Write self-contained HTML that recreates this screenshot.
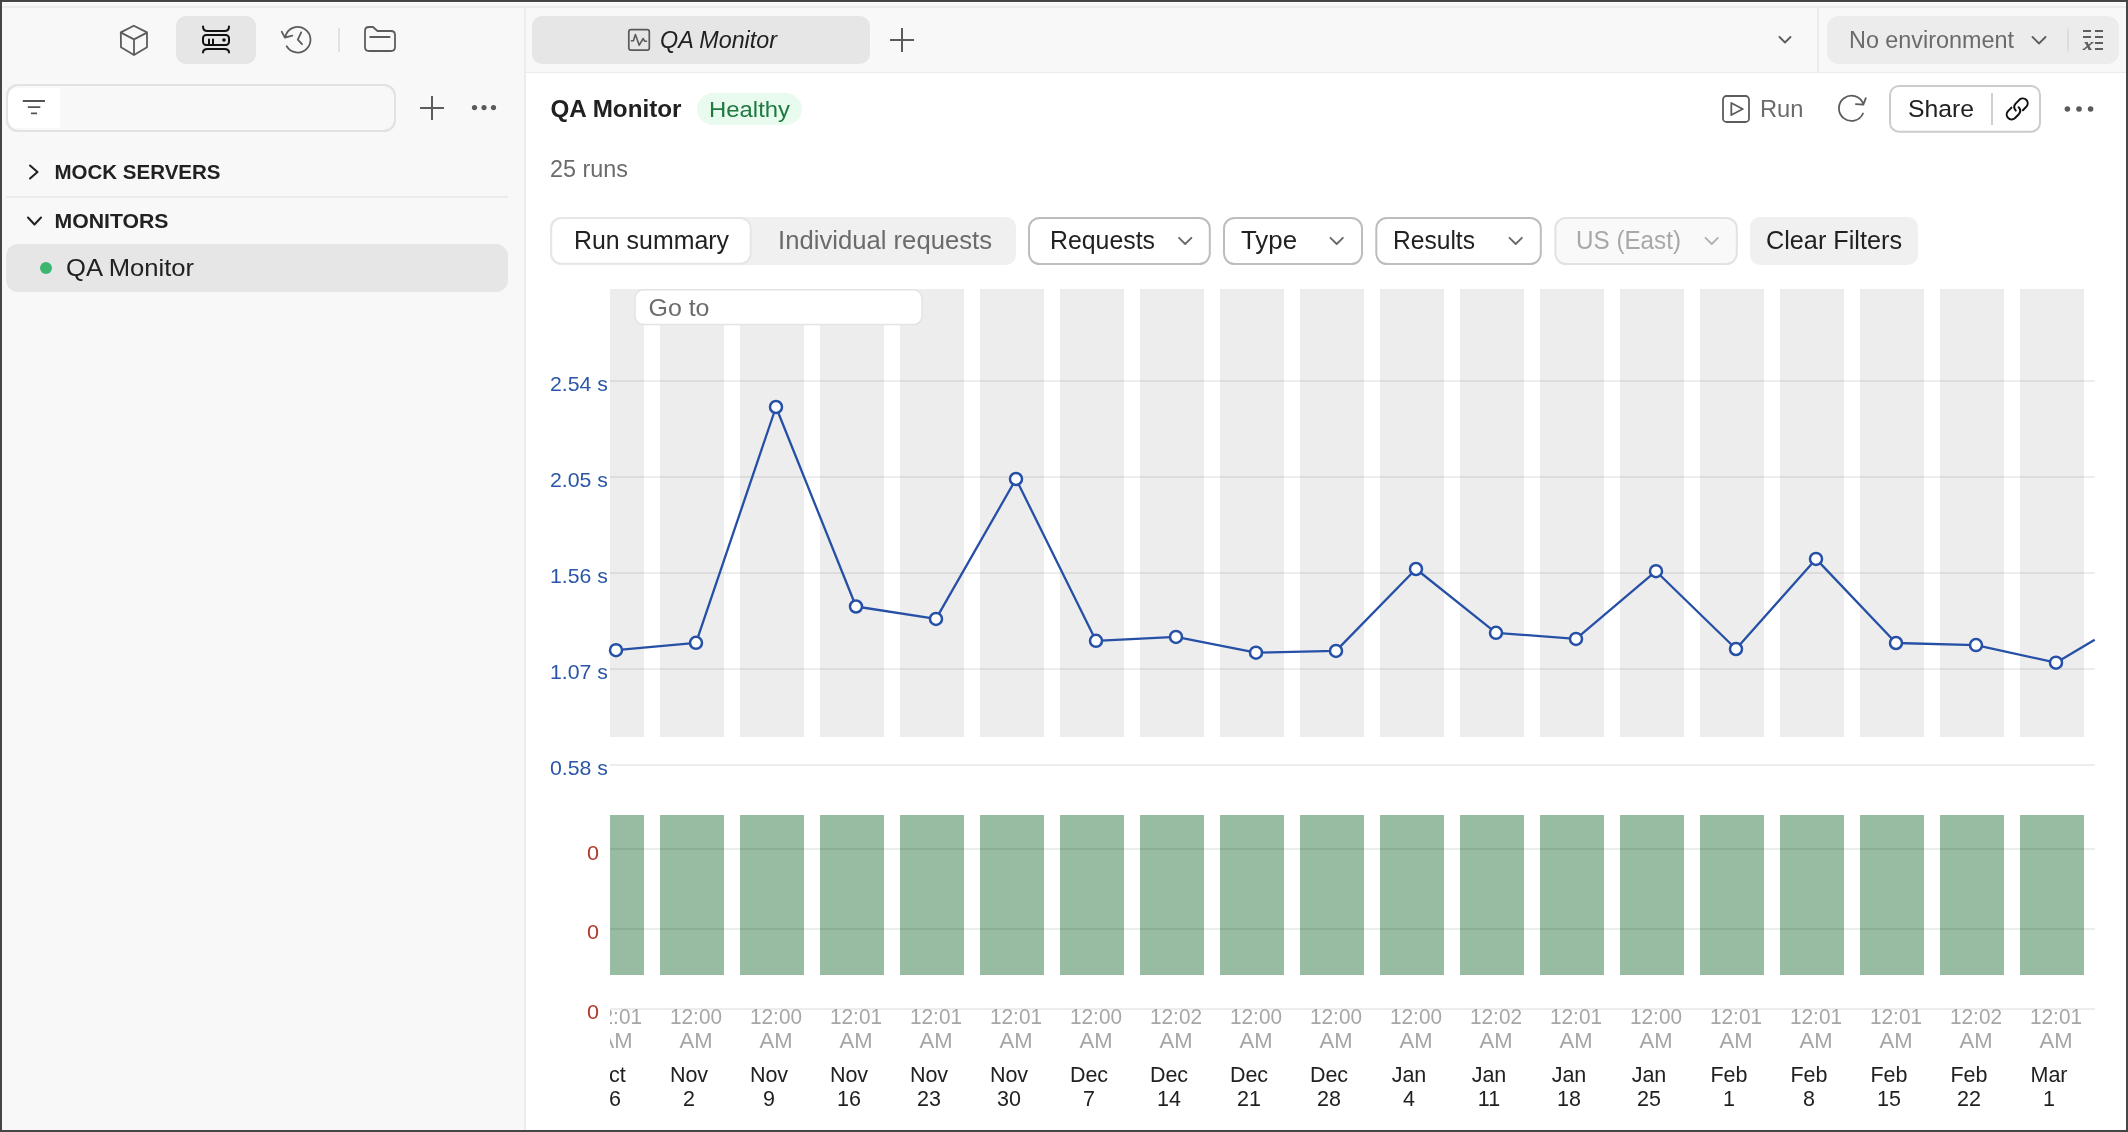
<!DOCTYPE html>
<html><head><meta charset="utf-8"><title>QA Monitor</title>
<style>
html,body{margin:0;padding:0;background:#454545;}
body{width:2128px;height:1132px;overflow:hidden;font-family:"Liberation Sans", sans-serif;}
svg{display:block;will-change:transform;}
text{font-family:"Liberation Sans", sans-serif;}
</style></head><body>
<svg width="2128" height="1132" viewBox="0 0 2128 1132">
<rect x="0" y="0" width="2128" height="1132" fill="#454545"/>
<rect x="2" y="2" width="2124" height="1128" fill="#f8f8f8"/>
<rect x="2" y="2" width="2124" height="1" fill="#ffffff"/>
<rect x="2" y="6" width="2124" height="2" fill="#ebebeb"/>
<rect x="526" y="73" width="1600" height="1057" fill="#ffffff"/>
<rect x="524" y="8" width="2" height="1122" fill="#ececec"/>
<rect x="526" y="72" width="1600" height="1" fill="#ebebeb"/>
<rect x="1817" y="8" width="2" height="64" fill="#ececec"/>
<rect x="176" y="16" width="80" height="48" rx="10" fill="#e6e6e6"/>
<path d="M120.8,32.4 L133.8,25.7 L147,32.4 L147,47.2 L134,55 L121,47.2 Z M121,32.6 L134,39.4 L147,32.6 M134,39.4 L134,55" fill="none" stroke="#5c5c5c" stroke-width="1.8" stroke-linecap="round" stroke-linejoin="round"/>
<path d="M203,26.5 Q203,31 207.5,31 L224.5,31 Q229,31 229,26.5 M203,52.5 Q203,49 207.5,49 L224.5,49 Q229,49 229,52.5" fill="none" stroke="#111" stroke-width="2" stroke-linecap="round" stroke-linejoin="round"/>
<rect x="203" y="35" width="26" height="10" rx="3.2" fill="none" stroke="#111" stroke-width="2" stroke-linecap="round" stroke-linejoin="round"/>
<path d="M209,39.5 V44.5 M213,39.5 V44.5" fill="none" stroke="#111" stroke-width="2" stroke-linecap="round" stroke-linejoin="round"/>
<circle cx="224" cy="40" r="1.8" fill="#111"/>
<path d="M286.7,46.3 A12.8,12.8 0 1 0 285.6,35.6 M281.7,31.7 L284.9,37.7 L292.3,35.7 M301.2,32.4 L297.8,39.6 L302,44.2" fill="none" stroke="#5c5c5c" stroke-width="1.8" stroke-linecap="round" stroke-linejoin="round"/>
<rect x="338" y="28" width="2" height="24" fill="#e2e2e2"/>
<path d="M365,31 Q365,27 369,27 L373,27 L377.5,31 L391,31 Q395,31 395,35 L395,47 Q395,51 391,51 L369,51 Q365,51 365,47 Z M370.2,37 H389.6" fill="none" stroke="#5c5c5c" stroke-width="1.8" stroke-linecap="round" stroke-linejoin="round"/>
<rect x="7" y="85" width="388" height="46" rx="11" fill="#f8f8f8" stroke="#e3e3e3" stroke-width="2"/>
<path d="M8,98 Q8,88 18,88 L60,88 L60,128 L18,128 Q8,128 8,118 Z" fill="#ffffff"/><rect x="7" y="85" width="388" height="46" rx="11" fill="none" stroke="#e3e3e3" stroke-width="2"/>
<path d="M22.8,101 H45 M27.8,107.1 H40.3 M31,113.4 H37.1" fill="none" stroke="#555" stroke-width="1.8"/>
<path d="M420,108 H444 M432,96 V120" fill="none" stroke="#5c5c5c" stroke-width="2" stroke-linecap="butt"/>
<circle cx="474.5" cy="107.6" r="2.6" fill="#5a5a5a"/>
<circle cx="484" cy="107.6" r="2.6" fill="#5a5a5a"/>
<circle cx="493.5" cy="107.6" r="2.6" fill="#5a5a5a"/>
<path d="M30,165.5 L37.5,172 L30,178.5" fill="none" stroke="#212121" stroke-width="2" stroke-linecap="round" stroke-linejoin="round"/>
<text x="54.5" y="179" font-size="20.5" fill="#212121" font-weight="bold" textLength="166" lengthAdjust="spacingAndGlyphs" >MOCK SERVERS</text>
<rect x="6" y="196" width="502" height="2" fill="#ebebeb"/>
<path d="M28,217.5 L34.5,224.5 L41,217.5" fill="none" stroke="#212121" stroke-width="2" stroke-linecap="round" stroke-linejoin="round"/>
<text x="54.5" y="228" font-size="20.5" fill="#212121" font-weight="bold" textLength="114" lengthAdjust="spacingAndGlyphs">MONITORS</text>
<rect x="6" y="244" width="502" height="48" rx="12" fill="#e6e6e6"/>
<circle cx="46" cy="268" r="6" fill="#3db66f"/>
<text x="66" y="275.5" font-size="24" fill="#212121" textLength="128" lengthAdjust="spacingAndGlyphs">QA Monitor</text>
<rect x="532" y="16" width="338" height="48" rx="10" fill="#e6e6e6"/>
<rect x="628.8" y="29.7" width="20.5" height="20.5" rx="2.2" fill="none" stroke="#5a5a5a" stroke-width="1.7"/>
<path d="M631.4,40.8 H633.4 L635.4,34.6 L639.2,45.2 L643.2,38.5 L644.6,41.2 H646.5" fill="none" stroke="#5a5a5a" stroke-width="1.6" stroke-linecap="round" stroke-linejoin="round"/>
<text x="660" y="48" font-size="23" fill="#212121" font-style="italic" textLength="117" lengthAdjust="spacingAndGlyphs">QA Monitor</text>
<path d="M890,40 H914 M902,28 V52" fill="none" stroke="#5c5c5c" stroke-width="2" stroke-linecap="butt"/>
<path d="M1779.5,37 L1785,42.5 L1790.5,37" fill="none" stroke="#5c5c5c" stroke-width="1.8" stroke-linecap="round" stroke-linejoin="round"/>
<rect x="1827" y="16" width="292" height="48" rx="12" fill="#ececec"/>
<text x="1849" y="48" font-size="23" fill="#6b6b6b" textLength="165" lengthAdjust="spacingAndGlyphs">No environment</text>
<path d="M2032.5,37 L2039,43.5 L2045.5,37" fill="none" stroke="#5c5c5c" stroke-width="1.8" stroke-linecap="round" stroke-linejoin="round"/>
<rect x="2067" y="28.5" width="2" height="23" fill="#dddddd"/>
<path d="M2083,31 H2091 M2083,37 H2091 M2095,31 H2103 M2095,37 H2103 M2095,43 H2103 M2095,49 H2103" fill="none" stroke="#5e5e5e" stroke-width="1.8"/>
<path d="M2086.2,42.4 L2090,49.6" fill="none" stroke="#5e5e5e" stroke-width="2.3"/><path d="M2092.4,42.4 L2083.8,49.6 M2084.6,42.6 H2087.6 M2088.6,49.4 H2091.6 M2090.8,42.6 H2093.4 M2082.6,49.4 H2085.2" fill="none" stroke="#5e5e5e" stroke-width="1.4"/>
<text x="550.5" y="117.2" font-size="24" fill="#212121" font-weight="bold" textLength="131" lengthAdjust="spacingAndGlyphs">QA Monitor</text>
<rect x="697" y="93" width="105" height="32" rx="16" fill="#e9fbef"/>
<text x="709" y="117" font-size="22.5" fill="#1f7a40" textLength="81" lengthAdjust="spacingAndGlyphs">Healthy</text>
<rect x="1723" y="96" width="26" height="26" rx="3.5" fill="none" stroke="#5c5c5c" stroke-width="1.8" stroke-linecap="round" stroke-linejoin="round"/>
<path d="M1731.3,103 L1742.8,109 L1731.3,115 Z" fill="none" stroke="#5c5c5c" stroke-width="1.8" stroke-linecap="round" stroke-linejoin="round"/>
<text x="1760" y="116.6" font-size="24.5" fill="#6b6b6b" textLength="43.5" lengthAdjust="spacingAndGlyphs">Run</text>
<path d="M1863,113.5 A12.6,12.6 0 1 1 1863.2,103.6 M1865.8,98.2 L1863.3,104.6 L1855.9,104.1" fill="none" stroke="#5c5c5c" stroke-width="1.8" stroke-linecap="round" stroke-linejoin="round"/>
<rect x="1890" y="86" width="150" height="45.7" rx="9" fill="#ffffff" stroke="#cccccc" stroke-width="2"/>
<text x="1908" y="116.6" font-size="24.5" fill="#212121" textLength="66" lengthAdjust="spacingAndGlyphs">Share</text>
<rect x="1991" y="93" width="2" height="32" fill="#d0d0d0"/>
<path d="M2015.8,110.6 Q2012.6,107 2015.6,103.6 L2019.6,99.6 A4.9,4.9 0 0 1 2026.6,106.4 L2022.9,110.2" fill="none" stroke="#111" stroke-width="2" stroke-linecap="round" stroke-linejoin="round"/>
<path d="M2015.8,110.6 Q2012.6,107 2015.6,103.6 L2019.6,99.6 A4.9,4.9 0 0 1 2026.6,106.4 L2022.9,110.2" transform="rotate(180 2017.2 108.9)" fill="none" stroke="#111" stroke-width="2" stroke-linecap="round" stroke-linejoin="round"/>
<circle cx="2067.4" cy="109" r="2.8" fill="#5a5a5a"/>
<circle cx="2079" cy="109" r="2.8" fill="#5a5a5a"/>
<circle cx="2090.6" cy="109" r="2.8" fill="#5a5a5a"/>
<text x="550" y="177" font-size="23" fill="#6b6b6b" textLength="78" lengthAdjust="spacingAndGlyphs">25 runs</text>
<rect x="550" y="217" width="466" height="48" rx="10" fill="#f0f0f0"/>
<rect x="551.2" y="218" width="199.5" height="45.8" rx="10.5" fill="#ffffff" stroke="#e6e6e6" stroke-width="2"/>
<text x="574" y="249.2" font-size="25" fill="#212121" textLength="155" lengthAdjust="spacingAndGlyphs">Run summary</text>
<text x="778" y="249.2" font-size="25" fill="#6b6b6b" textLength="214" lengthAdjust="spacingAndGlyphs">Individual requests</text>
<rect x="1029" y="218" width="180.79999999999995" height="46" rx="10.5" fill="#ffffff" stroke="#bdbdbd" stroke-width="2"/>
<text x="1050" y="249.2" font-size="25" fill="#212121" textLength="105" lengthAdjust="spacingAndGlyphs">Requests</text>
<path d="M1179,237.8 L1185.2,244 L1191.4,237.8" fill="none" stroke="#666666" stroke-width="1.8" stroke-linecap="round" stroke-linejoin="round"/>
<rect x="1224" y="218" width="138" height="46" rx="10.5" fill="#ffffff" stroke="#bdbdbd" stroke-width="2"/>
<text x="1241" y="249.2" font-size="25" fill="#212121" textLength="56" lengthAdjust="spacingAndGlyphs">Type</text>
<path d="M1330.5,237.8 L1336.7,244 L1342.9,237.8" fill="none" stroke="#666666" stroke-width="1.8" stroke-linecap="round" stroke-linejoin="round"/>
<rect x="1376.3" y="218" width="164.5" height="46" rx="10.5" fill="#ffffff" stroke="#bdbdbd" stroke-width="2"/>
<text x="1393" y="249.2" font-size="25" fill="#212121" textLength="82" lengthAdjust="spacingAndGlyphs">Results</text>
<path d="M1509.5,237.8 L1515.7,244 L1521.9,237.8" fill="none" stroke="#666666" stroke-width="1.8" stroke-linecap="round" stroke-linejoin="round"/>
<rect x="1555.4" y="218" width="181.39999999999986" height="46" rx="10.5" fill="#f9f9f9" stroke="#e2e2e2" stroke-width="2"/>
<text x="1576" y="249.2" font-size="25" fill="#a8a8a8" textLength="105" lengthAdjust="spacingAndGlyphs">US (East)</text>
<path d="M1705.5,237.8 L1711.7,244 L1717.9,237.8" fill="none" stroke="#b0b0b0" stroke-width="1.8" stroke-linecap="round" stroke-linejoin="round"/>
<rect x="1750" y="217" width="168" height="48" rx="10" fill="#f0f0f0"/>
<text x="1766" y="249.2" font-size="25" fill="#212121" textLength="136" lengthAdjust="spacingAndGlyphs">Clear Filters</text>
<defs><clipPath id="plot"><rect x="610" y="0" width="1516" height="1132"/></clipPath></defs>
<g clip-path="url(#plot)">
<rect x="580" y="289" width="64" height="448" fill="#ededed"/>
<rect x="660" y="289" width="64" height="448" fill="#ededed"/>
<rect x="740" y="289" width="64" height="448" fill="#ededed"/>
<rect x="820" y="289" width="64" height="448" fill="#ededed"/>
<rect x="900" y="289" width="64" height="448" fill="#ededed"/>
<rect x="980" y="289" width="64" height="448" fill="#ededed"/>
<rect x="1060" y="289" width="64" height="448" fill="#ededed"/>
<rect x="1140" y="289" width="64" height="448" fill="#ededed"/>
<rect x="1220" y="289" width="64" height="448" fill="#ededed"/>
<rect x="1300" y="289" width="64" height="448" fill="#ededed"/>
<rect x="1380" y="289" width="64" height="448" fill="#ededed"/>
<rect x="1460" y="289" width="64" height="448" fill="#ededed"/>
<rect x="1540" y="289" width="64" height="448" fill="#ededed"/>
<rect x="1620" y="289" width="64" height="448" fill="#ededed"/>
<rect x="1700" y="289" width="64" height="448" fill="#ededed"/>
<rect x="1780" y="289" width="64" height="448" fill="#ededed"/>
<rect x="1860" y="289" width="64" height="448" fill="#ededed"/>
<rect x="1940" y="289" width="64" height="448" fill="#ededed"/>
<rect x="2020" y="289" width="64" height="448" fill="#ededed"/>
<rect x="610" y="289" width="354" height="36" fill="#ededed"/>
</g>
<rect x="610" y="380" width="1485" height="2" fill="#000" fill-opacity="0.07"/>
<rect x="610" y="476" width="1485" height="2" fill="#000" fill-opacity="0.07"/>
<rect x="610" y="572" width="1485" height="2" fill="#000" fill-opacity="0.07"/>
<rect x="610" y="668" width="1485" height="2" fill="#000" fill-opacity="0.07"/>
<rect x="610" y="764" width="1485" height="2" fill="#000" fill-opacity="0.07"/>
<rect x="635" y="289.8" width="287" height="34.8" rx="8.5" fill="#ffffff" stroke="#e3e3e3" stroke-width="1.5"/>
<text x="648.5" y="316" font-size="24.5" fill="#6b6b6b" textLength="61" lengthAdjust="spacingAndGlyphs">Go to</text>
<text x="550" y="390.9" font-size="21" fill="#2b56a8" textLength="58" lengthAdjust="spacingAndGlyphs">2.54 s</text>
<text x="550" y="486.8" font-size="21" fill="#2b56a8" textLength="58" lengthAdjust="spacingAndGlyphs">2.05 s</text>
<text x="550" y="582.8" font-size="21" fill="#2b56a8" textLength="58" lengthAdjust="spacingAndGlyphs">1.56 s</text>
<text x="550" y="678.8" font-size="21" fill="#2b56a8" textLength="58" lengthAdjust="spacingAndGlyphs">1.07 s</text>
<text x="550" y="775" font-size="21" fill="#2b56a8" textLength="58" lengthAdjust="spacingAndGlyphs">0.58 s</text>
<path d="M616,650.2 L696,642.8 L776,407 L856,606.5 L936,618.9 L1016,479 L1096,640.8 L1176,636.9 L1256,652.7 L1336,650.9 L1416,569 L1496,632.8 L1576,638.9 L1656,571.2 L1736,649 L1816,558.9 L1896,643 L1976,645.1 L2056,662.7 L2094.7,639.8" fill="none" stroke="#2650a6" stroke-width="2.3" stroke-linejoin="round"/>
<circle cx="616" cy="650.2" r="6" fill="#ffffff" stroke="#2650a6" stroke-width="2.5"/>
<circle cx="696" cy="642.8" r="6" fill="#ffffff" stroke="#2650a6" stroke-width="2.5"/>
<circle cx="776" cy="407" r="6" fill="#ffffff" stroke="#2650a6" stroke-width="2.5"/>
<circle cx="856" cy="606.5" r="6" fill="#ffffff" stroke="#2650a6" stroke-width="2.5"/>
<circle cx="936" cy="618.9" r="6" fill="#ffffff" stroke="#2650a6" stroke-width="2.5"/>
<circle cx="1016" cy="479" r="6" fill="#ffffff" stroke="#2650a6" stroke-width="2.5"/>
<circle cx="1096" cy="640.8" r="6" fill="#ffffff" stroke="#2650a6" stroke-width="2.5"/>
<circle cx="1176" cy="636.9" r="6" fill="#ffffff" stroke="#2650a6" stroke-width="2.5"/>
<circle cx="1256" cy="652.7" r="6" fill="#ffffff" stroke="#2650a6" stroke-width="2.5"/>
<circle cx="1336" cy="650.9" r="6" fill="#ffffff" stroke="#2650a6" stroke-width="2.5"/>
<circle cx="1416" cy="569" r="6" fill="#ffffff" stroke="#2650a6" stroke-width="2.5"/>
<circle cx="1496" cy="632.8" r="6" fill="#ffffff" stroke="#2650a6" stroke-width="2.5"/>
<circle cx="1576" cy="638.9" r="6" fill="#ffffff" stroke="#2650a6" stroke-width="2.5"/>
<circle cx="1656" cy="571.2" r="6" fill="#ffffff" stroke="#2650a6" stroke-width="2.5"/>
<circle cx="1736" cy="649" r="6" fill="#ffffff" stroke="#2650a6" stroke-width="2.5"/>
<circle cx="1816" cy="558.9" r="6" fill="#ffffff" stroke="#2650a6" stroke-width="2.5"/>
<circle cx="1896" cy="643" r="6" fill="#ffffff" stroke="#2650a6" stroke-width="2.5"/>
<circle cx="1976" cy="645.1" r="6" fill="#ffffff" stroke="#2650a6" stroke-width="2.5"/>
<circle cx="2056" cy="662.7" r="6" fill="#ffffff" stroke="#2650a6" stroke-width="2.5"/>
<g clip-path="url(#plot)">
<rect x="580" y="815" width="64" height="160" fill="#97bca1"/>
<rect x="660" y="815" width="64" height="160" fill="#97bca1"/>
<rect x="740" y="815" width="64" height="160" fill="#97bca1"/>
<rect x="820" y="815" width="64" height="160" fill="#97bca1"/>
<rect x="900" y="815" width="64" height="160" fill="#97bca1"/>
<rect x="980" y="815" width="64" height="160" fill="#97bca1"/>
<rect x="1060" y="815" width="64" height="160" fill="#97bca1"/>
<rect x="1140" y="815" width="64" height="160" fill="#97bca1"/>
<rect x="1220" y="815" width="64" height="160" fill="#97bca1"/>
<rect x="1300" y="815" width="64" height="160" fill="#97bca1"/>
<rect x="1380" y="815" width="64" height="160" fill="#97bca1"/>
<rect x="1460" y="815" width="64" height="160" fill="#97bca1"/>
<rect x="1540" y="815" width="64" height="160" fill="#97bca1"/>
<rect x="1620" y="815" width="64" height="160" fill="#97bca1"/>
<rect x="1700" y="815" width="64" height="160" fill="#97bca1"/>
<rect x="1780" y="815" width="64" height="160" fill="#97bca1"/>
<rect x="1860" y="815" width="64" height="160" fill="#97bca1"/>
<rect x="1940" y="815" width="64" height="160" fill="#97bca1"/>
<rect x="2020" y="815" width="64" height="160" fill="#97bca1"/>
</g>
<rect x="610" y="848" width="1485" height="2" fill="#000" fill-opacity="0.07"/>
<rect x="610" y="928" width="1485" height="2" fill="#000" fill-opacity="0.07"/>
<rect x="610" y="1008" width="1485" height="2" fill="#000" fill-opacity="0.07"/>
<text x="587" y="859.6" font-size="21" fill="#b03a2e" textLength="12" lengthAdjust="spacingAndGlyphs">0</text>
<text x="587" y="939.3" font-size="21" fill="#b03a2e" textLength="12" lengthAdjust="spacingAndGlyphs">0</text>
<text x="587" y="1019" font-size="21" fill="#b03a2e" textLength="12" lengthAdjust="spacingAndGlyphs">0</text>
<g clip-path="url(#plot)">
<text x="616" y="1024.3" font-size="22" fill="#a6a6a6" text-anchor="middle" textLength="52" lengthAdjust="spacingAndGlyphs">12:01</text>
<text x="616" y="1048" font-size="22" fill="#a6a6a6" text-anchor="middle" textLength="33" lengthAdjust="spacingAndGlyphs">AM</text>
<text x="609" y="1082" font-size="21.5" fill="#212121" text-anchor="middle">Oct</text>
<text x="609" y="1106" font-size="21.5" fill="#212121" text-anchor="middle">26</text>
<text x="696" y="1024.3" font-size="22" fill="#a6a6a6" text-anchor="middle" textLength="52" lengthAdjust="spacingAndGlyphs">12:00</text>
<text x="696" y="1048" font-size="22" fill="#a6a6a6" text-anchor="middle" textLength="33" lengthAdjust="spacingAndGlyphs">AM</text>
<text x="689" y="1082" font-size="21.5" fill="#212121" text-anchor="middle">Nov</text>
<text x="689" y="1106" font-size="21.5" fill="#212121" text-anchor="middle">2</text>
<text x="776" y="1024.3" font-size="22" fill="#a6a6a6" text-anchor="middle" textLength="52" lengthAdjust="spacingAndGlyphs">12:00</text>
<text x="776" y="1048" font-size="22" fill="#a6a6a6" text-anchor="middle" textLength="33" lengthAdjust="spacingAndGlyphs">AM</text>
<text x="769" y="1082" font-size="21.5" fill="#212121" text-anchor="middle">Nov</text>
<text x="769" y="1106" font-size="21.5" fill="#212121" text-anchor="middle">9</text>
<text x="856" y="1024.3" font-size="22" fill="#a6a6a6" text-anchor="middle" textLength="52" lengthAdjust="spacingAndGlyphs">12:01</text>
<text x="856" y="1048" font-size="22" fill="#a6a6a6" text-anchor="middle" textLength="33" lengthAdjust="spacingAndGlyphs">AM</text>
<text x="849" y="1082" font-size="21.5" fill="#212121" text-anchor="middle">Nov</text>
<text x="849" y="1106" font-size="21.5" fill="#212121" text-anchor="middle">16</text>
<text x="936" y="1024.3" font-size="22" fill="#a6a6a6" text-anchor="middle" textLength="52" lengthAdjust="spacingAndGlyphs">12:01</text>
<text x="936" y="1048" font-size="22" fill="#a6a6a6" text-anchor="middle" textLength="33" lengthAdjust="spacingAndGlyphs">AM</text>
<text x="929" y="1082" font-size="21.5" fill="#212121" text-anchor="middle">Nov</text>
<text x="929" y="1106" font-size="21.5" fill="#212121" text-anchor="middle">23</text>
<text x="1016" y="1024.3" font-size="22" fill="#a6a6a6" text-anchor="middle" textLength="52" lengthAdjust="spacingAndGlyphs">12:01</text>
<text x="1016" y="1048" font-size="22" fill="#a6a6a6" text-anchor="middle" textLength="33" lengthAdjust="spacingAndGlyphs">AM</text>
<text x="1009" y="1082" font-size="21.5" fill="#212121" text-anchor="middle">Nov</text>
<text x="1009" y="1106" font-size="21.5" fill="#212121" text-anchor="middle">30</text>
<text x="1096" y="1024.3" font-size="22" fill="#a6a6a6" text-anchor="middle" textLength="52" lengthAdjust="spacingAndGlyphs">12:00</text>
<text x="1096" y="1048" font-size="22" fill="#a6a6a6" text-anchor="middle" textLength="33" lengthAdjust="spacingAndGlyphs">AM</text>
<text x="1089" y="1082" font-size="21.5" fill="#212121" text-anchor="middle">Dec</text>
<text x="1089" y="1106" font-size="21.5" fill="#212121" text-anchor="middle">7</text>
<text x="1176" y="1024.3" font-size="22" fill="#a6a6a6" text-anchor="middle" textLength="52" lengthAdjust="spacingAndGlyphs">12:02</text>
<text x="1176" y="1048" font-size="22" fill="#a6a6a6" text-anchor="middle" textLength="33" lengthAdjust="spacingAndGlyphs">AM</text>
<text x="1169" y="1082" font-size="21.5" fill="#212121" text-anchor="middle">Dec</text>
<text x="1169" y="1106" font-size="21.5" fill="#212121" text-anchor="middle">14</text>
<text x="1256" y="1024.3" font-size="22" fill="#a6a6a6" text-anchor="middle" textLength="52" lengthAdjust="spacingAndGlyphs">12:00</text>
<text x="1256" y="1048" font-size="22" fill="#a6a6a6" text-anchor="middle" textLength="33" lengthAdjust="spacingAndGlyphs">AM</text>
<text x="1249" y="1082" font-size="21.5" fill="#212121" text-anchor="middle">Dec</text>
<text x="1249" y="1106" font-size="21.5" fill="#212121" text-anchor="middle">21</text>
<text x="1336" y="1024.3" font-size="22" fill="#a6a6a6" text-anchor="middle" textLength="52" lengthAdjust="spacingAndGlyphs">12:00</text>
<text x="1336" y="1048" font-size="22" fill="#a6a6a6" text-anchor="middle" textLength="33" lengthAdjust="spacingAndGlyphs">AM</text>
<text x="1329" y="1082" font-size="21.5" fill="#212121" text-anchor="middle">Dec</text>
<text x="1329" y="1106" font-size="21.5" fill="#212121" text-anchor="middle">28</text>
<text x="1416" y="1024.3" font-size="22" fill="#a6a6a6" text-anchor="middle" textLength="52" lengthAdjust="spacingAndGlyphs">12:00</text>
<text x="1416" y="1048" font-size="22" fill="#a6a6a6" text-anchor="middle" textLength="33" lengthAdjust="spacingAndGlyphs">AM</text>
<text x="1409" y="1082" font-size="21.5" fill="#212121" text-anchor="middle">Jan</text>
<text x="1409" y="1106" font-size="21.5" fill="#212121" text-anchor="middle">4</text>
<text x="1496" y="1024.3" font-size="22" fill="#a6a6a6" text-anchor="middle" textLength="52" lengthAdjust="spacingAndGlyphs">12:02</text>
<text x="1496" y="1048" font-size="22" fill="#a6a6a6" text-anchor="middle" textLength="33" lengthAdjust="spacingAndGlyphs">AM</text>
<text x="1489" y="1082" font-size="21.5" fill="#212121" text-anchor="middle">Jan</text>
<text x="1489" y="1106" font-size="21.5" fill="#212121" text-anchor="middle">11</text>
<text x="1576" y="1024.3" font-size="22" fill="#a6a6a6" text-anchor="middle" textLength="52" lengthAdjust="spacingAndGlyphs">12:01</text>
<text x="1576" y="1048" font-size="22" fill="#a6a6a6" text-anchor="middle" textLength="33" lengthAdjust="spacingAndGlyphs">AM</text>
<text x="1569" y="1082" font-size="21.5" fill="#212121" text-anchor="middle">Jan</text>
<text x="1569" y="1106" font-size="21.5" fill="#212121" text-anchor="middle">18</text>
<text x="1656" y="1024.3" font-size="22" fill="#a6a6a6" text-anchor="middle" textLength="52" lengthAdjust="spacingAndGlyphs">12:00</text>
<text x="1656" y="1048" font-size="22" fill="#a6a6a6" text-anchor="middle" textLength="33" lengthAdjust="spacingAndGlyphs">AM</text>
<text x="1649" y="1082" font-size="21.5" fill="#212121" text-anchor="middle">Jan</text>
<text x="1649" y="1106" font-size="21.5" fill="#212121" text-anchor="middle">25</text>
<text x="1736" y="1024.3" font-size="22" fill="#a6a6a6" text-anchor="middle" textLength="52" lengthAdjust="spacingAndGlyphs">12:01</text>
<text x="1736" y="1048" font-size="22" fill="#a6a6a6" text-anchor="middle" textLength="33" lengthAdjust="spacingAndGlyphs">AM</text>
<text x="1729" y="1082" font-size="21.5" fill="#212121" text-anchor="middle">Feb</text>
<text x="1729" y="1106" font-size="21.5" fill="#212121" text-anchor="middle">1</text>
<text x="1816" y="1024.3" font-size="22" fill="#a6a6a6" text-anchor="middle" textLength="52" lengthAdjust="spacingAndGlyphs">12:01</text>
<text x="1816" y="1048" font-size="22" fill="#a6a6a6" text-anchor="middle" textLength="33" lengthAdjust="spacingAndGlyphs">AM</text>
<text x="1809" y="1082" font-size="21.5" fill="#212121" text-anchor="middle">Feb</text>
<text x="1809" y="1106" font-size="21.5" fill="#212121" text-anchor="middle">8</text>
<text x="1896" y="1024.3" font-size="22" fill="#a6a6a6" text-anchor="middle" textLength="52" lengthAdjust="spacingAndGlyphs">12:01</text>
<text x="1896" y="1048" font-size="22" fill="#a6a6a6" text-anchor="middle" textLength="33" lengthAdjust="spacingAndGlyphs">AM</text>
<text x="1889" y="1082" font-size="21.5" fill="#212121" text-anchor="middle">Feb</text>
<text x="1889" y="1106" font-size="21.5" fill="#212121" text-anchor="middle">15</text>
<text x="1976" y="1024.3" font-size="22" fill="#a6a6a6" text-anchor="middle" textLength="52" lengthAdjust="spacingAndGlyphs">12:02</text>
<text x="1976" y="1048" font-size="22" fill="#a6a6a6" text-anchor="middle" textLength="33" lengthAdjust="spacingAndGlyphs">AM</text>
<text x="1969" y="1082" font-size="21.5" fill="#212121" text-anchor="middle">Feb</text>
<text x="1969" y="1106" font-size="21.5" fill="#212121" text-anchor="middle">22</text>
<text x="2056" y="1024.3" font-size="22" fill="#a6a6a6" text-anchor="middle" textLength="52" lengthAdjust="spacingAndGlyphs">12:01</text>
<text x="2056" y="1048" font-size="22" fill="#a6a6a6" text-anchor="middle" textLength="33" lengthAdjust="spacingAndGlyphs">AM</text>
<text x="2049" y="1082" font-size="21.5" fill="#212121" text-anchor="middle">Mar</text>
<text x="2049" y="1106" font-size="21.5" fill="#212121" text-anchor="middle">1</text>
</g>
</svg></body></html>
